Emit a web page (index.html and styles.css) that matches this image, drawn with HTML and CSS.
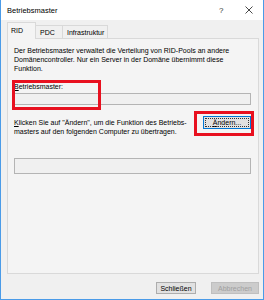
FILE: index.html
```html
<!DOCTYPE html>
<html lang="de">
<head>
<meta charset="UTF-8">
<title>Betriebsmaster</title>
<link rel="stylesheet" href="styles.css">
</head>
<body>

<div class="window">
  <div class="titlebar">
    <span class="title">Betriebsmaster</span>
    <span class="help">?</span>
    <span class="close">
      <svg width="8" height="8" viewBox="0 0 8 8"><path d="M0.5 0.5 L7.5 7.5 M7.5 0.5 L0.5 7.5" stroke="#333" stroke-width="0.9" fill="none"/></svg>
    </span>
  </div>

  <div class="content">
    <div class="tabs">
      <div class="tab active">RID</div>
      <div class="tab tab-pdc">PDC</div>
      <div class="tab tab-infra">Infrastruktur</div>
    </div>

    <div class="panel">
      <p class="intro">Der Betriebsmaster verwaltet die Verteilung von RID-Pools an andere Domänencontroller. Nur ein Server in der Domäne übernimmt diese Funktion.</p>

      <label class="field-label"><u>B</u>etriebsmaster:</label>
      <div class="textbox"></div>

      <div class="change-row">
        <p class="hint"><u>K</u>licken Sie auf "Ändern", um die Funktion des Betriebs-<br>masters auf den folgenden Computer zu übertragen.</p>
        <button class="btn focused"><u>Ä</u>ndern...</button>
      </div>

      <div class="textbox tall"></div>

      <!-- annotation boxes drawn over the dialog -->
      <div class="mark mark-field"></div>
      <div class="mark mark-button"></div>
    </div>

    <div class="footer">
      <button class="btn">Schließen</button>
      <button class="btn disabled">Abbrechen</button>
    </div>
  </div>
</div>

</body>
</html>
```

FILE: styles.css
```css
body {
  margin: 0;
  font-family: "Liberation Sans", Arial, sans-serif;
  font-size: 7px;
  color: #000;
  background: #fff;
}
.window {
  width: 264px;
  height: 300px;
  box-sizing: border-box;
  border: 1px solid #4a9be8;
  border-top: none;
  background: #f0f0f0;
  display: flex;
  flex-direction: column;
}
.titlebar {
  height: 20px;
  background: #fff;
  display: flex;
  align-items: center;
  padding-left: 6px;
}
.title {
  font-size: 7.5px;
  flex: 1;
}
.help {
  font-size: 8px;
  width: 10px;
  margin-right: 16px;
  color: #333;
}
.close {
  width: 8px;
  height: 8px;
  margin-right: 10px;
  display: flex;
}
.content {
  flex: 1;
  padding: 2px 4px 0 6px;
  display: flex;
  flex-direction: column;
}
.tabs {
  display: flex;
  align-items: flex-end;
  height: 16px;
  position: relative;
  z-index: 1;
}
.tab {
  height: 13px;
  line-height: 13px;
  padding: 0 3px 0 4px;
  border: 1px solid #d9d9d9;
  border-bottom: none;
  margin-left: -1px;
  background: #f0f0f0;
  box-sizing: border-box;
  white-space: nowrap;
}
.tab:first-child {
  margin-left: 0;
}
.tab.active {
  height: 17px;
  line-height: 15px;
  width: 29px;
  padding-left: 3px;
  background: #f4f4f4;
  margin-bottom: -1px;
}
.tab-pdc {
  width: 28px;
}
.panel {
  position: relative;
  height: 236px;
  box-sizing: border-box;
  border: 1px solid #d9d9d9;
  background: #f4f4f4;
  padding: 7px 7px 0 6px;
}
.intro {
  margin: 0;
  line-height: 9px;
  padding-right: 20px;
}
.field-label {
  display: block;
  margin-top: 9px;
  line-height: 9px;
}
.textbox {
  margin-top: 2px;
  height: 12px;
  box-sizing: border-box;
  border: 1px solid #b4b4b4;
  background: #f0f0f0;
}
.textbox.tall {
  height: 16px;
  margin-top: 22px;
}
.change-row {
  display: flex;
  align-items: flex-start;
  margin-top: 11px;
}
.hint {
  margin: 2px 0 0;
  line-height: 9px;
  flex: 1;
  white-space: nowrap;
}
.btn {
  font-family: "Liberation Sans", Arial, sans-serif;
  font-size: 7px;
  height: 12px;
  padding: 0;
  border: 1px solid #adadad;
  background: #e1e1e1;
  color: #000;
}
.btn.focused {
  width: 48px;
  height: 13px;
  border-color: #0078d7;
  outline: 1px dotted #333;
  outline-offset: -3px;
}
.btn.disabled {
  border-color: #bfbfbf;
  background: #cccccc;
  color: #a0a0a0;
}
.footer {
  display: flex;
  justify-content: flex-end;
  gap: 15px;
  padding: 8px 0 0;
}
.footer .btn {
  width: 40px;
}
.footer .btn.disabled {
  width: 48px;
}
.mark {
  position: absolute;
  border: 3px solid #e8101f;
}
.mark-field {
  left: 4px;
  top: 41px;
  width: 83px;
  height: 24px;
}
.mark-button {
  left: 186px;
  top: 72px;
  width: 54px;
  height: 19px;
}
```
